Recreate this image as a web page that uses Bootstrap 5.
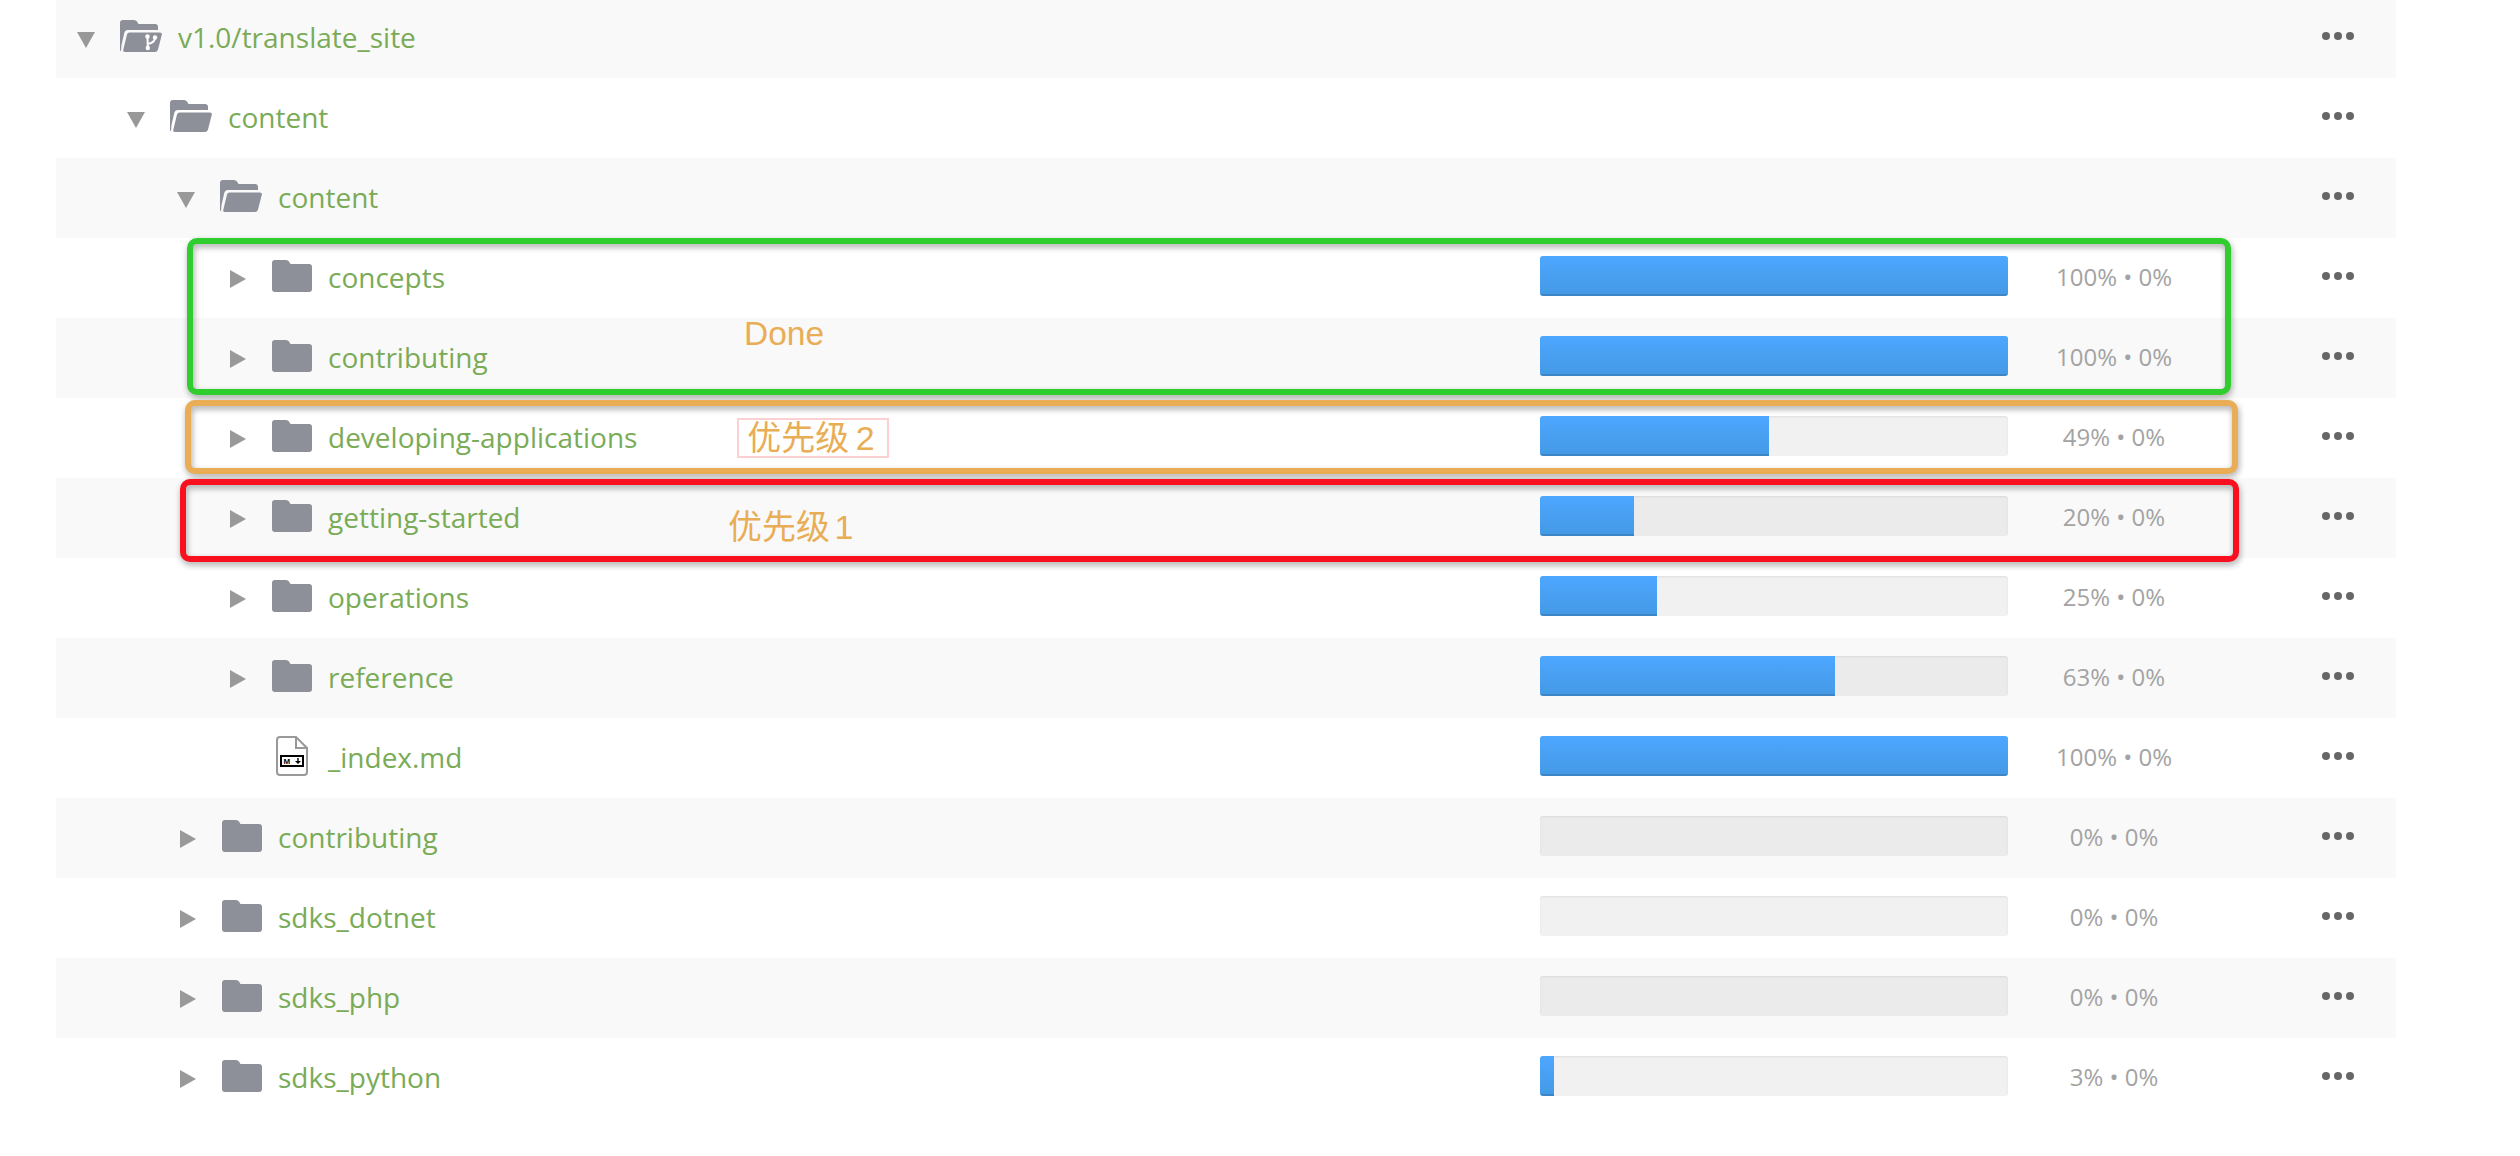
<!DOCTYPE html>
<html lang="en">

<head>
    <meta charset="UTF-8">
    <meta name="viewport" content="width=device-width, initial-scale=1.0">
    <title>Translate Site</title>
    <link href="https://cdn.jsdelivr.net/npm/bootstrap@5.3.0/dist/css/bootstrap.min.css" rel="stylesheet">
    <style>
        body {
            background: #fff;
            font-family: "Open Sans", "Liberation Sans", sans-serif;
        }

        .tree-list {
            margin: -2px 0 0 56px;
            width: 2340px;
            border-radius: 0;
        }

        .tree-row {
            height: 80px;
            padding: 0 42px 4px 0;
            border: 0;
            background: #fff;
        }

        .tree-row:nth-child(odd) {
            background: #f9f9f9;
        }

        .lvl-0 { padding-left: 21px; }
        .lvl-1 { padding-left: 71px; }
        .lvl-2 { padding-left: 121px; }
        .lvl-2.kind-dir { padding-left: 124px; }
        .lvl-3 { padding-left: 174px; }

        .toggle-box {
            width: 43px;
            flex: none;
            margin-top: 8px;
        }

        .icon-box {
            width: 58px;
            flex: none;
        }

        .kind-dir .toggle-box,
        .kind-file .toggle-box {
            width: 42px;
            margin-top: 6px;
        }

        .kind-dir .icon-box,
        .kind-file .icon-box {
            width: 56px;
        }

        .kind-file .icon-box {
            padding-left: 4px;
        }

        .item-name {
            flex: 1;
            margin-top: 1px;
            font-size: 28px;
            line-height: 1;
            color: #7aab57;
            white-space: nowrap;
        }

        .trans-bar {
            width: 468px;
            height: 40px;
            flex: none;
            border-radius: 3px;
            background: rgba(0, 0, 0, .055);
            box-shadow: inset 0 1px 2px rgba(0, 0, 0, .08);
        }

        .trans-fill {
            background: linear-gradient(#4da7ff, #459ae6);
            border-bottom: 2px solid #3c86c8;
        }

        .trans-stat {
            width: 212px;
            flex: none;
            margin-top: 2px;
            font-size: 24px;
            line-height: 1;
            text-align: center;
            color: #a3a3a3;
        }

        .more-dots {
            margin-left: 102px;
            flex: none;
            line-height: 0;
        }

        .note-box {
            position: absolute;
            border: 6px solid;
            border-radius: 10px;
            filter: drop-shadow(1px 3px 3px rgba(0, 0, 0, .35));
        }

        .note-green { left: 187px; top: 238px; width: 2044px; height: 157px; border-color: #30cd2e; }
        .note-orange { left: 185px; top: 400px; width: 2053px; height: 74px; border-color: #e8ad55; }
        .note-red { left: 180px; top: 479px; width: 2059px; height: 83px; border-color: #f8101f; }

        .note-text {
            position: absolute;
            font-family: "Liberation Sans", "Noto Sans CJK SC", sans-serif;
            font-size: 34px;
            line-height: 40px;
            word-spacing: -3px;
            color: #e8ad55;
            white-space: nowrap;
        }

        .note-done { left: 744px; top: 314px; font-size: 33.5px; }
        .note-p2 { left: 737px; top: 418px; width: 152px; height: 40px; padding-right: 4px; text-align: center; border: 2px solid #fbd0d2; line-height: 36px; }
        .note-p1 { left: 728px; top: 507px; word-spacing: -5px; }
    </style>
</head>

<body>
    <div class="list-group tree-list" id="tree"></div>

    <div class="note-box note-green"></div>
    <div class="note-box note-orange"></div>
    <div class="note-box note-red"></div>
    <div class="note-text note-done">Done</div>
    <div class="note-text note-p2">优先级 2</div>
    <div class="note-text note-p1">优先级 1</div>

    <script src="https://cdn.jsdelivr.net/npm/bootstrap@5.3.0/dist/js/bootstrap.bundle.min.js"></script>
    <script>
        const gray = "#8e9099";
        const arrowDown = `<svg width="18" height="16" viewBox="0 0 18 16"><path d="M0 0h18L9 16z" fill="#999"/></svg>`;
        const arrowRight = `<svg width="16" height="18" viewBox="0 0 16 18"><path d="M0 0l16 9L0 18z" fill="#999"/></svg>`;
        const folder = `<svg width="40" height="32" viewBox="0 0 40 32"><path d="M3 0h11q2 0 3 1.500L18.500 4H37a3 3 0 0 1 3 3v22a3 3 0 0 1-3 3H3a3 3 0 0 1-3-3V3a3 3 0 0 1 3-3z" fill="${gray}"/></svg>`;
        const openPaths = `<path d="M3 0h11q2 0 3 1.500L18.500 4H35a3 3 0 0 1 3 3v3H7.500q-2.500 0-3.100 2.500L1.500 25 1 31.500Q0 31 0 29V3a3 3 0 0 1 3-3z" fill="${gray}"/><path d="M9.500 12.500H40q2.300 0 1.800 2.300L38 29.500q-.7 2.500-3 2.500H5q-2.200 0-1.700-2.300L7 14.500q.5-2 2.500-2z" fill="${gray}"/>`;
        const folderOpen = `<svg width="42" height="32" viewBox="0 0 42 32">${openPaths}</svg>`;
        const folderRepo = `<svg width="42" height="32" viewBox="0 0 42 32">${openPaths}<g fill="#fff"><circle cx="27.500" cy="16.500" r="2.200"/><circle cx="35" cy="17.500" r="2.200"/><circle cx="27.800" cy="28" r="2.200"/></g><path d="M27.500 17.500l.3 10M35 18q0 4.500-7.300 6" stroke="#fff" stroke-width="2" fill="none"/></svg>`;
        const mdFile = `<svg width="32" height="40" viewBox="0 0 32 40"><path d="M4 1h16l11 11v24a3 3 0 0 1-3 3H4a3 3 0 0 1-3-3V4a3 3 0 0 1 3-3z" fill="#fff" stroke="#999" stroke-width="2"/><path d="M20 1v11h11" fill="none" stroke="#999" stroke-width="2"/><rect x="5" y="20" width="22" height="10" fill="#fff" stroke="#000" stroke-width="2"/><text x="7.500" y="27.900" font-family="Liberation Sans" font-weight="700" font-size="8" fill="#000">M</text><path d="M22 22v3" stroke="#000" stroke-width="1.400"/><path d="M19 25h6l-3 3z" fill="#000"/></svg>`;
        const dots = `<svg width="32" height="8" viewBox="0 0 32 8"><g fill="#666"><circle cx="4" cy="4" r="4"/><circle cx="16" cy="4" r="4"/><circle cx="28" cy="4" r="4"/></g></svg>`;

        // name, level, kind, translated %
        const items = [
            ["v1.0/translate_site", 0, "repo", null],
            ["content", 1, "open", null],
            ["content", 2, "open", null],
            ["concepts", 3, "dir", 100],
            ["contributing", 3, "dir", 100],
            ["developing-applications", 3, "dir", 49],
            ["getting-started", 3, "dir", 20],
            ["operations", 3, "dir", 25],
            ["reference", 3, "dir", 63],
            ["_index.md", 3, "file", 100],
            ["contributing", 2, "dir", 0],
            ["sdks_dotnet", 2, "dir", 0],
            ["sdks_php", 2, "dir", 0],
            ["sdks_python", 2, "dir", 3],
        ];
        const icons = { repo: folderRepo, open: folderOpen, dir: folder, file: mdFile };

        let html = "";
        items.forEach(([name, level, kind, pct]) => {
            let toggle = kind == "file" ? "" : (kind == "dir" ? arrowRight : arrowDown);
            let bar = "";
            let stat = "";
            if (pct !== null) {
                bar = `<div class="progress trans-bar"><div class="progress-bar trans-fill" style="width: ${pct}%"></div></div>`;
                stat = `<div class="trans-stat">${pct}% • 0%</div>`;
            }
            html += `
                <div class="list-group-item tree-row d-flex align-items-center lvl-${level} kind-${kind}">
                    <div class="toggle-box d-flex align-items-center">${toggle}</div>
                    <div class="icon-box d-flex align-items-center">${icons[kind]}</div>
                    <div class="item-name">${name}</div>
                    ${bar}${stat}
                    <div class="more-dots">${dots}</div>
                </div>`;
        });
        document.getElementById("tree").innerHTML = html;
    </script>
</body>

</html>
